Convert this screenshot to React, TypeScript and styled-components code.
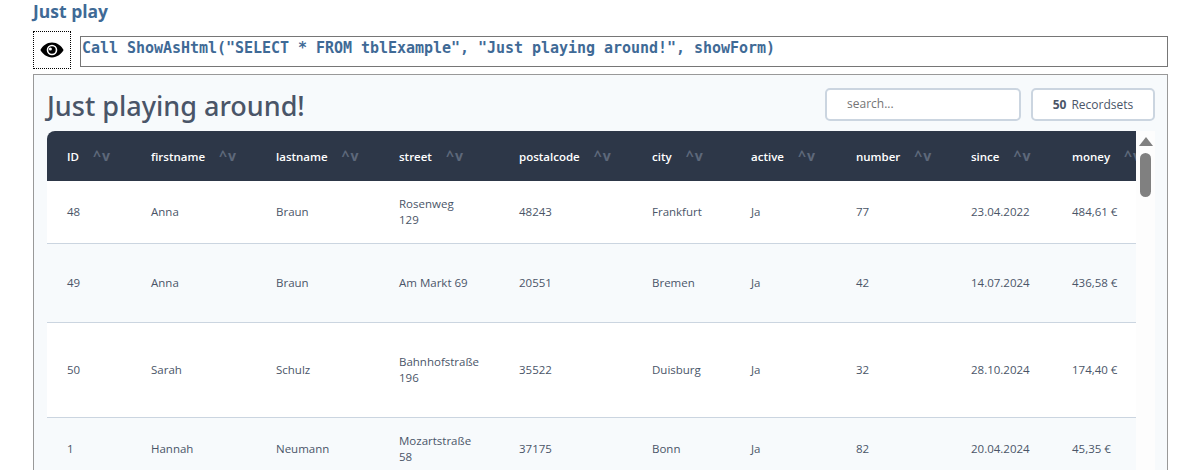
import React from 'react';
import styled, {createGlobalStyle} from "styled-components";

const Global = createGlobalStyle`
  html, body {
    margin: 0;
    height: 470px;
    overflow: hidden;
    background: #fff;
    font-family: "Open Sans", "Noto Sans", sans-serif;
  }
`

const columns = [
    {title: "ID", width: 84},
    {title: "firstname", width: 125},
    {title: "lastname", width: 123},
    {title: "street", width: 120},
    {title: "postalcode", width: 133},
    {title: "city", width: 99},
    {title: "active", width: 105},
    {title: "number", width: 115},
    {title: "since", width: 101},
    {title: "money", width: 120},
];

const rows = [
    {height: 62, cells: ["48", "Anna", "Braun", "Rosenweg 129", "48243", "Frankfurt", "Ja", "77", "23.04.2022", "484,61 €"]},
    {height: 79, cells: ["49", "Anna", "Braun", "Am Markt 69", "20551", "Bremen", "Ja", "42", "14.07.2024", "436,58 €"]},
    {height: 95, cells: ["50", "Sarah", "Schulz", "Bahnhofstraße 196", "35522", "Duisburg", "Ja", "32", "28.10.2024", "174,40 €"]},
    {height: 63, cells: ["1", "Hannah", "Neumann", "Mozartstraße 58", "37175", "Bonn", "Ja", "82", "20.04.2024", "45,35 €"]},
];

export default function App() {
    return (
        <Page>
            <Global/>
            <Heading>Just play</Heading>
            <CodeRow>
                <EyeButton>
                    <svg width="24" height="24" viewBox="0 0 24 24">
                        <path fillRule="evenodd" fill="#000" d="M12 4.6C6.8 4.6 2.6 8 .4 12c2.2 4 6.4 7.4 11.6 7.4S21.400 16 23.600 12C21.400 8 17.200 4.600 12 4.600zM12 6.700a5.300 5.300 0 1 1 0 10.600a5.300 5.300 0 0 1 0-10.600z"/>
                        <path fillRule="evenodd" fill="#000" d="M12 8.300a3.700 3.700 0 1 0 0 7.400a3.700 3.700 0 0 0 0-7.400zM10.400 9.600a1.500 1.500 0 1 1 0 3a1.500 1.500 0 0 1 0-3z"/>
                    </svg>
                </EyeButton>
                <CodeLine>Call ShowAsHtml("SELECT * FROM tblExample", "Just playing around!", showForm)</CodeLine>
            </CodeRow>
            <Panel>
                <PanelHeader>
                    <Title>Just playing around!</Title>
                    <Controls>
                        <Search placeholder="search..."/>
                        <CountBox><b>50</b> Recordsets</CountBox>
                    </Controls>
                </PanelHeader>
                <TableArea>
                    <TableClip>
                        <Table>
                            <colgroup>
                                {columns.map(c => <col key={c.title} width={c.width}/>)}
                            </colgroup>
                            <thead>
                                <tr>
                                    {columns.map(c => (
                                        <Th key={c.title}>{c.title}<SortMark>^v</SortMark></Th>
                                    ))}
                                </tr>
                            </thead>
                            <tbody>
                                {rows.map(r => (
                                    <Row key={r.cells[0]} $height={r.height}>
                                        {r.cells.map((cell, i) => <Td key={i}>{cell}</Td>)}
                                    </Row>
                                ))}
                            </tbody>
                        </Table>
                    </TableClip>
                    <Scrollbar>
                        <ArrowUp/>
                        <Thumb/>
                    </Scrollbar>
                </TableArea>
            </Panel>
        </Page>
    );
}

const Page = styled.div`
  padding: 0 32px 0 33px;
`

const Heading = styled.h3`
  margin: 0;
  height: 31px;
  font-size: 17.500px;
  line-height: 22px;
  font-weight: 700;
  color: #3f6a96;
`

const CodeRow = styled.div`
  display: flex;
  align-items: flex-start;
  gap: 9px;
  height: 38px;
`

const EyeButton = styled.div`
  box-sizing: border-box;
  flex: none;
  width: 38px;
  height: 38px;
  border: 1px dotted #000;
  display: flex;
  align-items: center;
  justify-content: center;
`

const CodeLine = styled.div`
  box-sizing: border-box;
  flex: 1;
  height: 31px;
  margin-top: 5px;
  border: 1px solid #767676;
  padding: 1px 1px 0;
  font-family: "DejaVu Sans Mono", monospace;
  font-size: 15px;
  letter-spacing: -0.03px;
  line-height: 20px;
  font-weight: 700;
  color: #3f6a96;
  white-space: pre;
  overflow: hidden;
`

const Panel = styled.div`
  box-sizing: border-box;
  margin-top: 5px;
  height: 500px;
  border: 1px solid #999;
  background: #f7fafc;
  padding: 13px 12px 0 13px;
`

const PanelHeader = styled.div`
  display: flex;
  justify-content: space-between;
  align-items: flex-start;
  height: 43px;
`

const Title = styled.h1`
  margin: -1px 0 0;
  font-family: "Noto Sans", "Open Sans", sans-serif;
  font-size: 27px;
  line-height: 38px;
  font-weight: 500;
  color: #4a5568;
`

const Controls = styled.div`
  display: flex;
  gap: 10px;
`

const Search = styled.input`
  box-sizing: border-box;
  width: 196px;
  height: 33px;
  border: 2px solid #cbd5e0;
  border-radius: 5px;
  background: #fff;
  padding: 0 20px 2px;
  font-family: inherit;
  font-size: 12px;
  color: #4a5568;
  outline: none;

  &::placeholder {
    color: #757575;
    opacity: 1;
  }
`

const CountBox = styled.div`
  box-sizing: border-box;
  width: 124px;
  height: 33px;
  border: 2px solid #cbd5e0;
  border-radius: 5px;
  background: #fff;
  display: flex;
  align-items: center;
  justify-content: center;
  gap: 5px;
  font-size: 12px;
  color: #4a5568;

  b {
    font-weight: 700;
  }
`

const TableArea = styled.div`
  display: flex;
  align-items: stretch;
`

const TableClip = styled.div`
  width: 1089px;
  overflow: hidden;
  border-radius: 8px 0 0 0;
`

const Table = styled.table`
  width: 1125px;
  table-layout: fixed;
  border-collapse: collapse;
  background: #fff;
`

const Th = styled.th`
  height: 50px;
  padding: 0 0 2px 20px;
  box-sizing: border-box;
  background: #2d3748;
  color: #fff;
  font-size: 11.500px;
  font-weight: 600;
  text-align: left;
  white-space: nowrap;
`

const SortMark = styled.span`
  margin-left: 14px;
  font-size: 14px;
  font-weight: 700;
  letter-spacing: 1px;
  color: #5d687a;
`

const Row = styled.tr<{$height: number}>`
  height: ${props => props.$height}px;
  border-bottom: 1px solid #cbd5e0;
  background: #fff;

  &:nth-child(even) {
    background: #f7fafc;
  }
`

const Td = styled.td`
  padding: 1px 25px 0 20px;
  font-size: 11.500px;
  line-height: 16px;
  color: #4a5568;
`

const Scrollbar = styled.div`
  width: 19px;
  flex: none;
  display: flex;
  flex-direction: column;
  align-items: center;
  padding-top: 6px;
  box-sizing: border-box;
  background: #fdfdfd;
`

const ArrowUp = styled.div`
  width: 0;
  height: 0;
  border-left: 7px solid transparent;
  border-right: 7px solid transparent;
  border-bottom: 9px solid #808080;
`

const Thumb = styled.div`
  margin-top: 7px;
  width: 11px;
  height: 44px;
  border-radius: 6px;
  background: #808080;
`
